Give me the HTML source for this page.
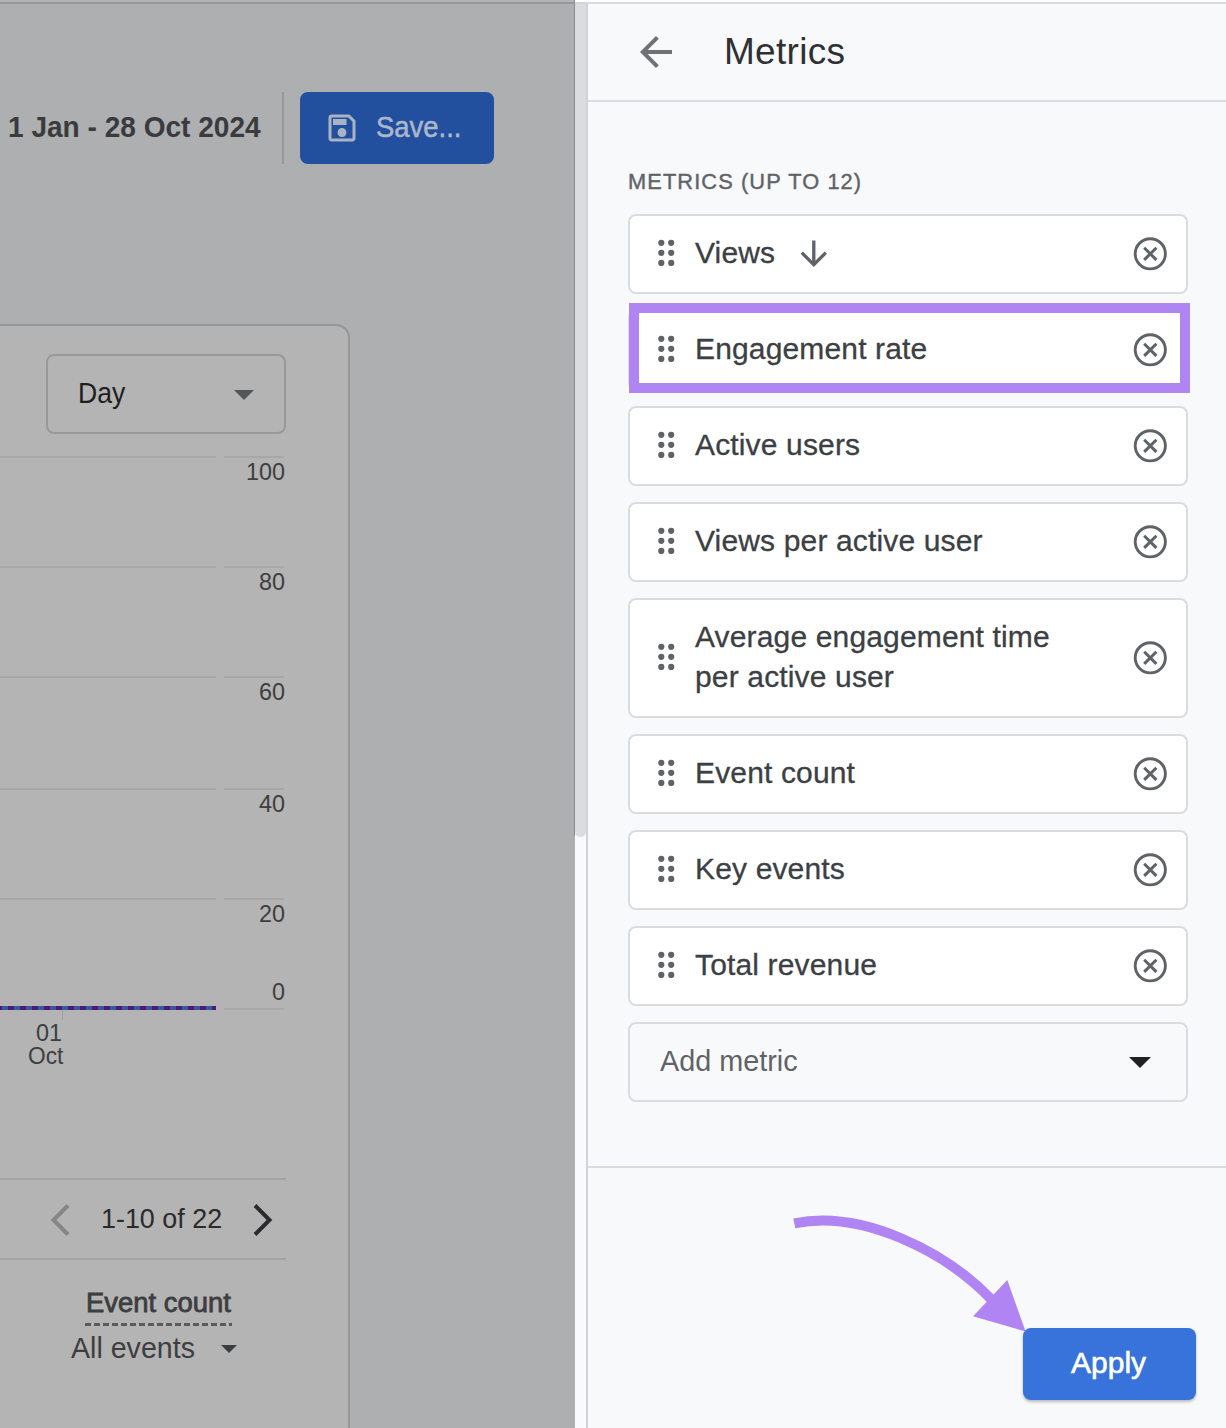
<!DOCTYPE html>
<html><head><meta charset="utf-8">
<style>
*{box-sizing:border-box;margin:0;padding:0}
html,body{width:1226px;height:1428px;overflow:hidden;background:#f8f9fa;font-family:"Liberation Sans",sans-serif}
.abs{position:absolute}
#left{position:absolute;left:0;top:0;width:575px;height:1428px;background:#aeafb1;overflow:hidden}
.t{position:absolute;white-space:nowrap;line-height:1}
#panel{position:absolute;left:588px;top:0;width:638px;height:1428px;background:#f8f9fa}
.box{position:absolute;left:628px;width:560px;height:80px;background:#fff;border:2px solid #dadce0;border-radius:8px}
.lbl{position:absolute;left:695px;font-size:30px;color:#3c4043;white-space:nowrap;line-height:1;-webkit-text-stroke:0.3px #3c4043;letter-spacing:0.15px}
.x{position:absolute;left:1133px;width:35px;height:35px}
.h{position:absolute;left:656px;width:22px;height:30px}
</style></head><body>

<div id="left">
  <!-- top strip -->
  <div class="abs" style="left:0;top:0;width:575px;height:2px;background:#b4b4b5"></div>
  <div class="abs" style="left:0;top:2px;width:575px;height:2px;background:#97989a"></div>
  <!-- date -->
  <div class="t" style="left:8px;top:112px;font-size:30px;font-weight:700;color:#393b3e;transform:scaleX(0.935);transform-origin:0 0">1 Jan - 28 Oct 2024</div>
  <div class="abs" style="left:282px;top:92px;width:2px;height:72px;background:#98999b"></div>
  <!-- save button -->
  <div class="abs" style="left:300px;top:92px;width:194px;height:72px;background:#234f9f;border-radius:8px"></div>
  <svg class="abs" style="left:323.5px;top:110px" width="36" height="36" viewBox="0 0 24 24"><path fill="#a9b3c6" d="M17 3H5c-1.11 0-2 .9-2 2v14c0 1.1.89 2 2 2h14c1.1 0 2-.9 2-2V7l-4-4zm2 16H5V5h11.17L19 7.83V19zm-7-7c-1.66 0-3 1.34-3 3s1.34 3 3 3 3-1.34 3-3-1.34-3-3-3zM6 6h9v4H6z"/></svg>
  <div class="t" style="left:376px;top:112px;font-size:29.5px;color:#adb7ca;-webkit-text-stroke:0.5px #adb7ca;transform:scaleX(0.93);transform-origin:0 0">Save...</div>

  <!-- card -->
  <div class="abs" style="left:-40px;top:324px;width:390px;height:1200px;background:#b4b4b4;border:2px solid #969799;border-radius:14px"></div>
  <!-- Day dropdown -->
  <div class="abs" style="left:46px;top:354px;width:240px;height:80px;border:2px solid #98999a;border-radius:8px"></div>
  <div class="t" style="left:78px;top:379px;font-size:28.6px;color:#1f1f1f;transform:scaleX(0.93);transform-origin:0 0">Day</div>
  <div class="abs" style="left:234px;top:390px;width:0;height:0;border-left:10px solid transparent;border-right:10px solid transparent;border-top:10px solid #545557"></div>

  <!-- grid -->
  <div class="abs" style="left:0;top:456px;width:216px;height:2px;background:#a8a8a9"></div>
  <div class="abs" style="left:224px;top:456px;width:60px;height:2px;background:#a8a8a9"></div>
  <div class="abs" style="left:0;top:566px;width:216px;height:2px;background:#a8a8a9"></div>
  <div class="abs" style="left:224px;top:566px;width:60px;height:2px;background:#a8a8a9"></div>
  <div class="abs" style="left:0;top:676px;width:216px;height:2px;background:#a8a8a9"></div>
  <div class="abs" style="left:224px;top:676px;width:60px;height:2px;background:#a8a8a9"></div>
  <div class="abs" style="left:0;top:788px;width:216px;height:2px;background:#a8a8a9"></div>
  <div class="abs" style="left:224px;top:788px;width:60px;height:2px;background:#a8a8a9"></div>
  <div class="abs" style="left:0;top:898px;width:216px;height:2px;background:#a8a8a9"></div>
  <div class="abs" style="left:224px;top:898px;width:60px;height:2px;background:#a8a8a9"></div>
  <div class="abs" style="left:224px;top:1008px;width:60px;height:2px;background:#a8a8a9"></div>
  <!-- axis labels -->
  <div class="t" style="right:290px;top:460.8px;font-size:23.4px;color:#3d3e40">100</div>
  <div class="t" style="right:290px;top:570.9px;font-size:23.4px;color:#3d3e40">80</div>
  <div class="t" style="right:290px;top:681px;font-size:23.4px;color:#3d3e40">60</div>
  <div class="t" style="right:290px;top:793.2px;font-size:23.4px;color:#3d3e40">40</div>
  <div class="t" style="right:290px;top:903.3px;font-size:23.4px;color:#3d3e40">20</div>
  <div class="t" style="right:290px;top:981.3px;font-size:23.4px;color:#3d3e40">0</div>
  <!-- data line -->
  <div class="abs" style="left:0;top:1006px;width:216px;height:4px;background:repeating-linear-gradient(90deg,#4a1c6e 0 1.8px,#3656a6 1.8px 7.8px,#4a1c6e 7.8px 12px)"></div>
  <div class="abs" style="left:62px;top:1010px;width:1px;height:10px;background:#a0a0a1"></div>
  <div class="t" style="left:36px;top:1021.5px;font-size:23.4px;color:#3d3e40">01</div>
  <div class="t" style="left:27.5px;top:1044.7px;font-size:23.4px;transform:scaleX(0.97);transform-origin:0 0;color:#3d3e40">Oct</div>

  <!-- pagination -->
  <div class="abs" style="left:0;top:1178px;width:286px;height:2px;background:#a2a3a4"></div>
  <div class="abs" style="left:0;top:1258px;width:286px;height:2px;background:#a2a3a4"></div>
  <svg class="abs" style="left:44px;top:1200px" width="40" height="40" viewBox="0 0 40 40"><path d="M24 5.5 L9.5 20 L24 34.5" fill="none" stroke="#858687" stroke-width="4"/></svg>
  <div class="t" style="left:101px;top:1206px;font-size:26.9px;color:#2a2b2d">1-10 of 22</div>
  <svg class="abs" style="left:246px;top:1200px" width="40" height="40" viewBox="0 0 40 40"><path d="M9 5.5 L23.5 20 L9 34.5" fill="none" stroke="#2a2b2d" stroke-width="4"/></svg>

  <div class="t" style="left:86px;top:1290px;font-size:26.9px;font-weight:400;color:#3d3e40;-webkit-text-stroke:0.8px #3d3e40;transform:scaleX(1.02);transform-origin:0 0">Event count</div>
  <div class="abs" style="left:85px;top:1323px;width:147px;height:3px;background:repeating-linear-gradient(90deg,#5a5b5d 0 6px,transparent 6px 9px)"></div>
  <div class="t" style="left:71px;top:1333.8px;font-size:28.6px;color:#3d3e40">All events</div>
  <div class="abs" style="left:221px;top:1345px;width:0;height:0;border-left:8px solid transparent;border-right:8px solid transparent;border-top:8px solid #3d3e40"></div>
</div>

<!-- scrollbar -->
<div class="abs" style="left:575px;top:0;width:12px;height:1428px;background:#f9fafb"></div>
<div class="abs" style="left:586px;top:0;width:2px;height:1428px;background:#d2d3d6"></div>
<div class="abs" style="left:575px;top:4px;width:11px;height:833px;background:#dadce0;border-radius:0 0 6px 6px"></div>
<div class="abs" style="left:574px;top:0;width:1px;height:836px;background:#8a8b8d"></div>
<div class="abs" style="left:575px;top:0;width:12px;height:2px;background:#fff"></div>
<div class="abs" style="left:575px;top:2px;width:12px;height:2px;background:#d5d6d8"></div>

<!-- panel -->
<div id="panel"></div>
<div class="abs" style="left:587px;top:0;width:639px;height:2px;background:#fff"></div>
<div class="abs" style="left:587px;top:2px;width:639px;height:2px;background:#dadce0"></div>
<svg class="abs" style="left:632px;top:28px" width="48" height="48" viewBox="0 0 24 24"><path fill="#707174" d="M20 11H7.83l5.59-5.59L12 4l-8 8 8 8 1.41-1.41L7.83 13H20v-2z"/></svg>
<div class="t" style="left:724px;top:32.5px;font-size:37px;color:#2f3033;letter-spacing:0.3px">Metrics</div>
<div class="abs" style="left:588px;top:100px;width:638px;height:2px;background:#dadce0"></div>

<div class="t" style="left:628px;top:170.5px;font-size:21.8px;color:#5f6368;letter-spacing:1.1px;-webkit-text-stroke:0.4px #5f6368">METRICS (UP TO 12)</div>

<!-- metric boxes -->
<div class="box" style="top:214px"></div>
<div class="box" style="top:310px"></div>
<div class="box" style="top:406px"></div>
<div class="box" style="top:502px"></div>
<div class="box" style="top:598px;height:120px"></div>
<div class="box" style="top:734px"></div>
<div class="box" style="top:830px"></div>
<div class="box" style="top:926px"></div>
<div class="box" style="top:1022px;background:#f8f9fa"></div>

<!-- highlight -->
<div class="abs" style="left:629px;top:303px;width:561px;height:90px;border:10px solid #ae85f3"></div>

<div class="lbl" style="top:238px">Views</div>
<svg class="abs" style="left:793.7px;top:234px" width="39.6" height="39.6" viewBox="0 0 24 24"><path fill="#5f6368" d="M20 12l-1.41-1.41L13 16.17V4h-2v12.17l-5.58-5.59L4 12l8 8 8-8z"/></svg>
<div class="lbl" style="top:334px">Engagement rate</div>
<div class="lbl" style="top:430px">Active users</div>
<div class="lbl" style="top:526px">Views per active user</div>
<div class="lbl" style="top:622px">Average engagement time</div>
<div class="lbl" style="top:662px">per active user</div>
<div class="lbl" style="top:758px">Event count</div>
<div class="lbl" style="top:854px">Key events</div>
<div class="lbl" style="top:950px">Total revenue</div>

<div class="t" style="left:660px;top:1046px;font-size:30px;color:#5f6368;transform:scaleX(0.96);transform-origin:0 0">Add metric</div>
<div class="abs" style="left:1129px;top:1057px;width:0;height:0;border-left:11px solid transparent;border-right:11px solid transparent;border-top:11px solid #202124"></div>

<div class="abs" style="left:588px;top:1166px;width:638px;height:2px;background:#dadce0"></div>

<svg width="0" height="0" style="position:absolute"><defs>
<g id="hd" fill="#5f6368"><circle cx="5.3" cy="4.8" r="3.1"/><circle cx="15.2" cy="4.8" r="3.1"/><circle cx="5.3" cy="14.8" r="3.1"/><circle cx="15.2" cy="14.8" r="3.1"/><circle cx="5.3" cy="24.9" r="3.1"/><circle cx="15.2" cy="24.9" r="3.1"/></g>
<g id="cx"><circle cx="17.3" cy="16.8" r="15.1" fill="none" stroke="#5f6368" stroke-width="2.9"/><path d="M11.2 10.7 L23.4 22.9 M23.4 10.7 L11.2 22.9" stroke="#5f6368" stroke-width="3"/></g>
</defs></svg>
<svg class="h" style="top:238px" width="22" height="30" viewBox="0 0 22 30"><use href="#hd"/></svg>
<svg class="x" style="top:237px" width="35" height="35" viewBox="0 0 35 35"><use href="#cx"/></svg>
<svg class="h" style="top:334px" width="22" height="30" viewBox="0 0 22 30"><use href="#hd"/></svg>
<svg class="x" style="top:333px" width="35" height="35" viewBox="0 0 35 35"><use href="#cx"/></svg>
<svg class="h" style="top:430px" width="22" height="30" viewBox="0 0 22 30"><use href="#hd"/></svg>
<svg class="x" style="top:429px" width="35" height="35" viewBox="0 0 35 35"><use href="#cx"/></svg>
<svg class="h" style="top:526px" width="22" height="30" viewBox="0 0 22 30"><use href="#hd"/></svg>
<svg class="x" style="top:525px" width="35" height="35" viewBox="0 0 35 35"><use href="#cx"/></svg>
<svg class="h" style="top:642px" width="22" height="30" viewBox="0 0 22 30"><use href="#hd"/></svg>
<svg class="x" style="top:641px" width="35" height="35" viewBox="0 0 35 35"><use href="#cx"/></svg>
<svg class="h" style="top:758px" width="22" height="30" viewBox="0 0 22 30"><use href="#hd"/></svg>
<svg class="x" style="top:757px" width="35" height="35" viewBox="0 0 35 35"><use href="#cx"/></svg>
<svg class="h" style="top:854px" width="22" height="30" viewBox="0 0 22 30"><use href="#hd"/></svg>
<svg class="x" style="top:853px" width="35" height="35" viewBox="0 0 35 35"><use href="#cx"/></svg>
<svg class="h" style="top:950px" width="22" height="30" viewBox="0 0 22 30"><use href="#hd"/></svg>
<svg class="x" style="top:949px" width="35" height="35" viewBox="0 0 35 35"><use href="#cx"/></svg>

<!-- Apply -->
<div class="abs" style="left:1023px;top:1328px;width:173px;height:72px;background:#3873dc;border-radius:8px;box-shadow:0 2px 3px rgba(0,0,0,0.25)"></div>
<div class="t" style="left:1071px;top:1348px;font-size:30px;color:#fff;-webkit-text-stroke:0.6px #fff">Apply</div>

<!-- arrow -->
<svg class="abs" style="left:0;top:0;pointer-events:none" width="1226" height="1428">
  <path d="M794.3 1223.4 C862.2 1209.3 945.8 1251.9 991 1299" fill="none" stroke="#b084f2" stroke-width="10"/>
  <polygon points="1007.3,1280 973.1,1316.2 1025.6,1331.6" fill="#b084f2"/>
</svg>
</body></html>
